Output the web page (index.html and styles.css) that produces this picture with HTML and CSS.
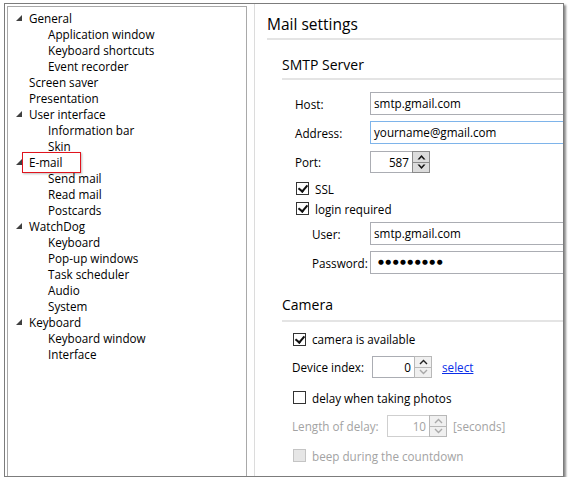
FILE: index.html
```html
<!DOCTYPE html>
<html>
<head>
  <title>Mail settings</title>
  <link rel="stylesheet" href="styles.css">
</head>
<body>
  <div class="frame">
    <div class="tree">
      <div class="node open">General</div>
      <div class="leaf">Application window</div>
      <div class="leaf">Keyboard shortcuts</div>
      <div class="leaf">Event recorder</div>
      <div class="node">Screen saver</div>
      <div class="node">Presentation</div>
      <div class="node open">User interface</div>
      <div class="leaf">Information bar</div>
      <div class="leaf">Skin</div>
      <div class="node open selected">E-mail</div>
      <div class="leaf">Send mail</div>
      <div class="leaf">Read mail</div>
      <div class="leaf">Postcards</div>
      <div class="node open">WatchDog</div>
      <div class="leaf">Keyboard</div>
      <div class="leaf">Pop-up windows</div>
      <div class="leaf">Task scheduler</div>
      <div class="leaf">Audio</div>
      <div class="leaf">System</div>
      <div class="node open">Keyboard</div>
      <div class="leaf">Keyboard window</div>
      <div class="leaf">Interface</div>
    </div>

    <div class="splitter"></div>

    <div class="panel">
      <h1 class="panel-title">Mail settings</h1>

      <div class="section">
        <h2 class="section-title">SMTP Server</h2>

        <div class="row host">
          <span class="label">Host:</span>
          <div class="field wide">smtp.gmail.com</div>
        </div>
        <div class="row address">
          <span class="label">Address:</span>
          <div class="field wide focused">yourname@gmail.com</div>
        </div>
        <div class="row port">
          <span class="label">Port:</span>
          <div class="spin">
            <div class="spin-value">587</div>
            <div class="spin-buttons">
              <div class="spin-btn"><svg width="9" height="6" viewBox="0 0 9 6"><path d="M0.5 5.5 L4.5 1 L8.5 5.5 L6.5 5.5 L4.5 3.2 L2.5 5.5 Z" fill="#111"/></svg></div>
              <div class="spin-btn"><svg width="9" height="6" viewBox="0 0 9 6"><path d="M0.5 0.5 L4.5 5 L8.5 0.5 L6.5 0.5 L4.5 2.8 L2.5 0.5 Z" fill="#111"/></svg></div>
            </div>
          </div>
        </div>
        <div class="check ssl">
          <span class="box checked"></span>SSL
        </div>
        <div class="check login">
          <span class="box checked"></span>login required
        </div>
        <div class="row sub user">
          <span class="label">User:</span>
          <div class="field wide">smtp.gmail.com</div>
        </div>
        <div class="row sub password">
          <span class="label">Password:</span>
          <div class="field wide dots">●●●●●●●●●</div>
        </div>
      </div>

      <div class="section">
        <h2 class="section-title camera-title">Camera</h2>

        <div class="check cam cam-available">
          <span class="box checked"></span>camera is available
        </div>
        <div class="row cam device">
          <span class="label">Device index:</span>
          <div class="spin">
            <div class="spin-value">0</div>
            <div class="spin-buttons light">
              <div class="spin-btn"><svg width="9" height="6" viewBox="0 0 9 6"><path d="M1 5 L4.5 1.5 L8 5" fill="none" stroke="#222" stroke-width="1.4"/></svg></div>
              <div class="spin-btn"><svg width="9" height="6" viewBox="0 0 9 6"><path d="M1 1 L4.5 4.5 L8 1" fill="none" stroke="#a8a8a8" stroke-width="1.4"/></svg></div>
            </div>
          </div>
          <a class="link" href="#">select</a>
        </div>
        <div class="check cam delay">
          <span class="box"></span>delay when taking photos
        </div>
        <div class="row cam length disabled">
          <span class="label">Length of delay:</span>
          <div class="spin">
            <div class="spin-value">10</div>
            <div class="spin-buttons light">
              <div class="spin-btn"><svg width="9" height="6" viewBox="0 0 9 6"><path d="M1 5 L4.5 1.5 L8 5" fill="none" stroke="#aaa" stroke-width="1.4"/></svg></div>
              <div class="spin-btn"><svg width="9" height="6" viewBox="0 0 9 6"><path d="M1 1 L4.5 4.5 L8 1" fill="none" stroke="#aaa" stroke-width="1.4"/></svg></div>
            </div>
          </div>
          <span class="unit">[seconds]</span>
        </div>
        <div class="check cam beep disabled">
          <span class="box"></span>beep during the countdown
        </div>
      </div>
    </div>
  </div>
</body>
</html>
```

FILE: styles.css
```css
body {
  margin: 0;
  background: #fff;
  font-family: "Open Sans", "Noto Sans", sans-serif;
  font-size: 11.7px;
  color: #000;
}

.frame {
  display: flex;
  margin: 3px 0 0 4px;
  width: 558px;
  height: 472px;
  border: 1px solid #7c7c7c;
  overflow: hidden;
  box-shadow: 2px 2px 2px rgba(0, 0, 0, 0.45);
}

/* left tree */
.tree {
  flex: none;
  width: 238px;
  margin: 2px 0 0 2px;
  padding-top: 3px;
  border: 1px solid #a9a9a9;
  border-bottom: none;
}

.node, .leaf {
  height: 16px;
  line-height: 16px;
  white-space: nowrap;
}

.node {
  position: relative;
  padding-left: 21px;
}

.leaf {
  padding-left: 40px;
}

.node.open::before {
  content: "";
  position: absolute;
  left: 8px;
  top: 5px;
  border-bottom: 6px solid #404040;
  border-left: 6px solid transparent;
}

.node.selected::after {
  content: "";
  position: absolute;
  left: 14px;
  top: -2px;
  width: 57px;
  height: 19px;
  border: 1px solid #e0141e;
  box-shadow: 1px 1px 2px rgba(0, 0, 0, 0.25);
}

.splitter {
  flex: none;
  width: 1px;
  margin-left: 7px;
  background: #dcdcdc;
}

/* right panel */
.panel {
  flex: 1;
  padding: 9px 0 0 12px;
  min-width: 0;
}

.panel-title {
  margin: 0;
  font-size: 15.5px;
  font-weight: normal;
  line-height: 22px;
  padding-bottom: 3px;
  border-bottom: 2px solid #e4e4e4;
}

.section {
  margin-left: 15px;
}

.section-title {
  margin: 15px 0 0;
  font-size: 14px;
  font-weight: normal;
  line-height: 20px;
  padding-bottom: 3px;
  border-bottom: 2px solid #e4e4e4;
}

.camera-title {
  margin-top: 21px;
  padding-bottom: 5px;
}

.row {
  display: flex;
  align-items: center;
  height: 23px;
  padding-left: 13px;
}

.row .label {
  width: 75px;
  flex: none;
}

.row.sub {
  padding-left: 30px;
}

.row.sub .label {
  width: 58px;
}

.host { margin-top: 12px; }
.address { margin-top: 6px; }
.port { margin-top: 7px; height: 22px; }
.user { margin-top: 7px; }
.password { margin-top: 6px; }

.field {
  box-sizing: border-box;
  height: 23px;
  line-height: 20px;
  border: 1px solid #abadb3;
  padding-left: 3px;
}

.field.wide {
  width: 300px;
  flex: none;
}

.field.focused {
  border-color: #7eb4ea;
}

.field.dots {
  font-family: "DejaVu Sans", sans-serif;
  font-size: 6.8px;
  letter-spacing: 1.4px;
  padding-left: 7px;
  line-height: 21px;
}

/* spin box */
.spin {
  display: flex;
  width: 60px;
  height: 22px;
  border: 1px solid #abadb3;
  box-sizing: border-box;
  flex: none;
}

.spin-value {
  flex: 1;
  text-align: right;
  padding-right: 3px;
  line-height: 20px;
}

.spin-buttons {
  width: 17px;
  display: flex;
  flex-direction: column;
}

.spin-btn {
  flex: 1;
  display: flex;
  align-items: center;
  justify-content: center;
  background: #dcdcdc;
  border: 1px solid #8a8a8a;
  margin: -1px -1px 0 0;
}

.spin-btn + .spin-btn {
  margin-top: 0;
  margin-bottom: -1px;
  border-top: none;
}

.spin-buttons.light .spin-btn {
  background: #f0f0f0;
  border-color: #b8b8b8;
}

/* checkboxes */
.check {
  display: flex;
  align-items: center;
  height: 13px;
  padding-left: 14px;
}

.box {
  width: 13px;
  height: 13px;
  box-sizing: border-box;
  border: 1px solid #333;
  background: #fff;
  margin-right: 6px;
  position: relative;
}

.box.checked::after {
  content: "";
  position: absolute;
  left: 3px;
  top: 0px;
  width: 4px;
  height: 7px;
  border-right: 2px solid #111;
  border-bottom: 2px solid #111;
  transform: rotate(40deg);
}

.ssl { margin-top: 9px; }
.login { margin-top: 7px; }

/* camera */
.check.cam {
  padding-left: 11px;
}

.row.cam {
  padding-left: 10px;
  height: 22px;
}

.device .label { width: 80px; }
.length .label { width: 95px; }

.cam-available { margin-top: 10px; height: 14px; }
.device { margin-top: 10px; }
.delay { margin-top: 13px; }
.length { margin-top: 11px; }
.beep { margin-top: 12px; }

.link {
  margin-left: 10px;
  color: #0a2ee8;
  text-decoration: underline;
}

.unit {
  margin-left: 6px;
}

.disabled {
  color: #a3a3a3;
}

.disabled .spin {
  border-color: #cfcfcf;
}

.disabled .box {
  background: #e6e6e6;
  border-color: #c4c4c4;
}
```
